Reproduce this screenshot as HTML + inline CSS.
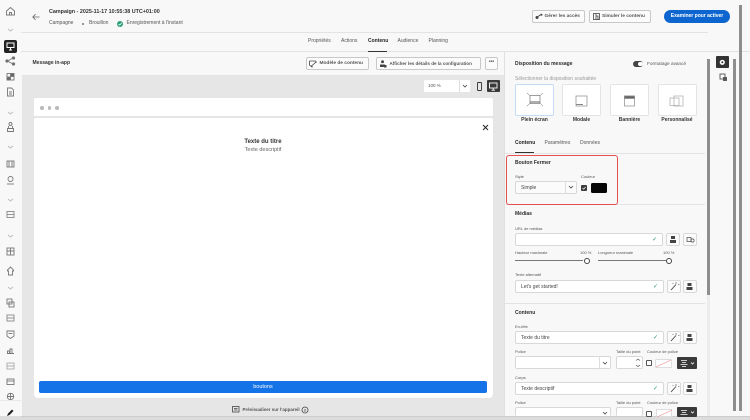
<!DOCTYPE html>
<html lang="fr"><head><meta charset="utf-8"><title>Campaign</title>
<style>
*{box-sizing:border-box}
html,body{margin:0;padding:0}
body{width:750px;height:420px;overflow:hidden;background:#f8f8f8;position:relative;font-family:"Liberation Sans",sans-serif;color:#2c2c2c}
.a{position:absolute}
.t{position:absolute;white-space:nowrap;line-height:1}
.btn{position:absolute;background:#fbfbfb;border:1px solid #c8c8c8;border-radius:2px;height:13px;font-size:4.800px;line-height:11px;font-weight:bold;color:#555;white-space:nowrap}
.ib{position:absolute;background:#fbfbfb;border:1px solid #d8d8d8;border-radius:2px;width:14px;height:13px}
.in{position:absolute;background:#fff;border:1px solid #d8d8d8;border-radius:2px;height:13px;font-size:5px;line-height:12px;color:#444;padding-left:5px}
.lb{position:absolute;font-size:4px;line-height:5px;color:#555;white-space:nowrap}
.h{position:absolute;font-size:5px;line-height:6px;font-weight:bold;color:#2c2c2c;white-space:nowrap}
.ck{position:absolute;right:5px;top:2px;color:#2d9d78;font-size:6px;line-height:9px}
.card{position:absolute;top:84px;width:39px;height:32px;background:#fff;border:1px solid #e4e4e4;border-radius:2px}
.cl{position:absolute;top:116.500px;font-size:5px;line-height:6px;font-weight:bold;text-align:center;color:#333;white-space:nowrap}
.hr{position:absolute;height:1px;background:#e3e3e3}
svg{position:absolute;overflow:visible}
.ic{fill:none;stroke:#777;stroke-width:.9}
.sc{position:absolute;background:#8e8e8e;width:3px}
</style></head><body>

<!-- sidebar -->
<div class="a" style="left:0;top:0;width:21px;height:420px;background:#f8f8f8"></div>
<svg style="left:0;top:0" width="21" height="420" class="ic">
<path d="M6.500 11 L10.500 7.500 L14.500 11 V15 H6.500Z M9.500 15 V12.500 H11.500 V15"/>
<path d="M8 29 l2.500 2 l2.500 -2M8 112 l2.500 2 l2.500 -2M8 146 l2.500 2 l2.500 -2M8 199 l2.500 2 l2.500 -2M8 235 l2.500 2 l2.500 -2M8 287 l2.500 2 l2.500 -2" stroke="#bbb"/>
<path d="M7.500 61 L13 58M7.500 61 L13 64" /><circle cx="7" cy="61" r="1.200" fill="#666"/><circle cx="13.500" cy="58" r="1.200" fill="#666"/><circle cx="13.500" cy="64" r="1.200" fill="#666"/>
<rect x="7" y="73.500" width="7" height="6.500"/><rect x="10.500" y="73.500" width="3.500" height="3" fill="#666"/><rect x="7" y="77" width="3.500" height="3" fill="#666"/>
<path d="M7.500 88 h4 l2 2 v6 h-6z M9 92 h3 M9 94 h3"/>
<circle cx="10.500" cy="124" r="1.500"/><path d="M8.500 126 v2 M12.500 126 v2 M7.500 128.500 h6 v3 h-6z"/>
<rect x="7" y="161" width="7" height="6"/><path d="M9 161 v6 M12 161 v6"/>
<circle cx="10.500" cy="179" r="2.500"/><path d="M7 184 h7"/>
<rect x="7" y="211.500" width="7" height="6" stroke="#888"/><path d="M7 214.500 h7" stroke="#888"/>
<rect x="7" y="248" width="7" height="7"/><path d="M7 251 h7 M10.500 248 v7"/>
<path d="M7.500 270 l3 -3 l3 3 v1 h-1 v4 h-4 v-4 h-1z"/>
<rect x="7" y="299" width="5" height="5"/><rect x="9" y="302" width="5" height="5"/>
<rect x="7" y="315" width="7" height="6" stroke="#888"/><path d="M7 318 h7" stroke="#888"/>
<path d="M7 331 h7 v5 l-3.500 2.500 l-3.500 -2.500z"/><path d="M8.500 333.500 h4"/>
<path d="M7.500 353 v-2 h2 v2 M10 353 v-4 h2 v4 M7 353.500 h7"/>
<rect x="7" y="363" width="7" height="6" stroke="#aaa"/><path d="M7 366 h7" stroke="#aaa"/>
<rect x="7" y="379" width="7" height="5.500"/><path d="M7 381 h7"/>
<circle cx="10.500" cy="396.500" r="3.200"/><path d="M7.300 396.500 h6.400 M10.500 393.300 v6.400"/>
</svg>
<div class="a" style="left:4px;top:39.500px;width:13px;height:13px;background:#222;border-radius:2px"></div>
<svg style="left:4px;top:39.500px" width="13" height="13" fill="none" stroke="#fff" stroke-width="1"><rect x="3" y="3" width="7" height="4.500"/><path d="M6.500 7.500 v2.500 M5 10 h3"/></svg>
<div class="hr" style="left:0;top:400px;width:21px;background:#e8e8e8"></div>
<svg style="left:6px;top:408px" width="9" height="9"><path d="M1 8 L2 5.500 L6 1.500 L7.500 3 L3.500 7z" fill="#222"/></svg>

<!-- header -->
<svg style="left:32px;top:13px" width="9" height="8" fill="none" stroke="#666" stroke-width=".8"><path d="M7.500 4 H.8 M3.500 1.200 L.8 4 L3.500 6.800"/></svg>
<div class="t" style="left:49px;top:10px;font-size:5.400px;font-weight:bold;color:#333">Campaign - 2025-11-17 10:55:38 UTC+01:00</div>
<div class="t" style="left:49px;top:21px;font-size:5px;color:#555">Campagne</div>
<div class="a" style="left:81.500px;top:22.500px;width:2.500px;height:2.500px;background:#777;border-radius:50%"></div>
<div class="t" style="left:89px;top:21px;font-size:5px;color:#555">Brouillon</div>
<div class="a" style="left:117px;top:20.500px;width:6px;height:6px;background:#2d9d78;border-radius:50%"></div>
<svg style="left:117px;top:20.500px" width="6" height="6" fill="none" stroke="#fff" stroke-width=".8"><path d="M1.500 3 L2.700 4.200 L4.600 1.900"/></svg>
<div class="t" style="left:126.500px;top:21px;font-size:5px;color:#555">Enregistrement à l'instant</div>

<div class="btn" style="left:531.500px;top:10px;width:53px;padding-left:12px">Gérer les accès</div>
<svg style="left:535px;top:13px" width="8" height="7"><circle cx="2" cy="4.500" r="1.500" fill="#444"/><path d="M3 3.500 L6 1.500" stroke="#444" stroke-width="1"/><circle cx="6.500" cy="1.800" r="1" fill="#444"/></svg>
<div class="btn" style="left:589px;top:10px;width:62px;padding-left:12px">Simuler le contenu</div>
<svg style="left:592.500px;top:12.500px" width="8" height="8" fill="none" stroke="#444" stroke-width=".8"><rect x=".5" y=".5" width="6" height="6"/><path d="M3 .5 v6 M3 3 h2 v4"/></svg>
<div class="a" style="left:664px;top:10px;width:66px;height:13px;background:#0d66d0;border-radius:7px;color:#fff;font-size:5px;font-weight:bold;line-height:13px;text-align:center">Examiner pour activer</div>

<div class="hr" style="left:21px;top:32px;width:687px"></div>
<div class="hr" style="left:21px;top:51px;width:729px"></div>

<!-- tabs -->
<div class="t" style="left:308px;top:39px;font-size:5px;color:#555">Propriétés</div>
<div class="t" style="left:341px;top:39px;font-size:5px;color:#555">Actions</div>
<div class="t" style="left:368px;top:39px;font-size:5px;font-weight:bold;color:#222">Contenu</div>
<div class="a" style="left:368px;top:50.500px;width:19px;height:1px;background:#333"></div>
<div class="t" style="left:397.500px;top:39px;font-size:5px;color:#555">Audience</div>
<div class="t" style="left:428.500px;top:39px;font-size:5px;color:#555">Planning</div>

<!-- Message row -->
<div class="t" style="left:32.500px;top:61px;font-size:5px;font-weight:bold;color:#333">Message in-app</div>
<div class="btn" style="left:305.500px;top:57px;width:63.500px;padding-left:13px">Modèle de contenu</div>
<svg style="left:309px;top:59.500px" width="8" height="8" fill="none" stroke="#444" stroke-width=".8"><path d="M.5 1 H7 M.5 1 V5 L3 7 V5 M7 1 V3 M2.500 6 L7 2"/></svg>
<div class="btn" style="left:375.500px;top:57px;width:105px;padding-left:13px;font-size:4.550px">Afficher les détails de la configuration</div>
<svg style="left:379px;top:59.500px" width="8" height="8"><circle cx="3.500" cy="1.800" r="1.500" fill="#444"/><path d="M1 7 V4.500 H6 V7z" fill="#444"/><rect x="5" y="5" width="2.500" height="2.500" fill="#444"/></svg>
<div class="btn" style="left:485px;top:57px;width:13px;text-align:center;line-height:9px;font-size:5px">•••</div>

<!-- canvas -->
<div class="a" style="left:22px;top:75px;width:482px;height:341px;background:#e6e6e6"></div>
<div class="a" style="left:423.500px;top:80px;width:46px;height:11.500px;background:#fff;border-radius:1px"></div>
<div class="t" style="left:428px;top:83.500px;font-size:4.500px;color:#555">100 %</div>
<div class="a" style="left:458.500px;top:80px;width:1px;height:11.500px;background:#ddd"></div>
<svg style="left:461.500px;top:84px" width="6" height="4" fill="none" stroke="#444" stroke-width=".8"><path d="M1 1 L3 3 L5 1"/></svg>
<svg style="left:476px;top:81.500px" width="8" height="9" fill="none" stroke="#333" stroke-width=".9"><rect x="1.500" y=".5" width="4" height="8" rx=".6"/></svg>
<div class="a" style="left:487px;top:79.500px;width:12.500px;height:12.500px;background:#3a3a3a;border-radius:1px"></div>
<svg style="left:487px;top:79.500px" width="13" height="13" fill="none" stroke="#fff" stroke-width=".9"><rect x="2.500" y="3" width="7.500" height="5"/><path d="M6.200 8 v2 M4.500 10.200 h3.500"/></svg>

<div class="a" style="left:33.500px;top:98px;width:459px;height:18px;background:#fff;border-radius:2px 2px 0 0"></div>
<div class="a" style="left:40px;top:106px;width:3.500px;height:3.500px;background:#bbb;border-radius:50%"></div>
<div class="a" style="left:47.500px;top:106px;width:3.500px;height:3.500px;background:#bbb;border-radius:50%"></div>
<div class="a" style="left:55px;top:106px;width:3.500px;height:3.500px;background:#bbb;border-radius:50%"></div>
<div class="a" style="left:33.500px;top:117.500px;width:459px;height:280px;background:#fff;border-radius:2px 2px 4px 4px"></div>
<svg style="left:481.500px;top:123.500px" width="7" height="7" fill="none" stroke="#222" stroke-width="1"><path d="M1 1 L6 6 M6 1 L1 6"/></svg>
<div class="t" style="left:33.500px;width:459px;text-align:center;top:139px;font-size:6px;font-weight:bold;color:#333">Texte du titre</div>
<div class="t" style="left:33.500px;width:459px;text-align:center;top:148px;font-size:5.500px;color:#666">Texte descriptif</div>
<div class="a" style="left:39px;top:381px;width:448px;height:12px;background:#1473e6;border-radius:2px;color:#fff;font-size:5.500px;line-height:12px;text-align:center">boutons</div>

<svg style="left:232px;top:406px" width="8" height="7" fill="none" stroke="#444" stroke-width=".8"><rect x=".5" y=".5" width="6.500" height="5.500"/><path d="M2 2.500 h3.500 M2 4 h3.500"/></svg>
<div class="t" style="left:242.500px;top:407.500px;font-size:4.500px;font-weight:bold;color:#555">Prévisualiser sur l'appareil</div>
<svg style="left:300.500px;top:405.500px" width="8" height="8" fill="none" stroke="#444" stroke-width=".8"><circle cx="4" cy="4" r="3"/><path d="M4 3 v2.700"/></svg>
<div class="a" style="left:0;top:416px;width:750px;height:4px;background:#dcdcdc"></div>
<div class="a" style="left:21px;top:416px;width:729px;height:1px;background:#ccc"></div>

<!-- right panel -->
<div class="a" style="left:504px;top:52px;width:1px;height:364px;background:#e0e0e0"></div>
<div class="h" style="left:515px;top:61px">Disposition du message</div>
<div class="a" style="left:632.500px;top:61px;width:10.500px;height:5.500px;background:#444;border-radius:3px"></div>
<div class="a" style="left:638px;top:61.500px;width:4.500px;height:4.500px;background:#fff;border-radius:50%"></div>
<div class="t" style="left:647px;top:61.500px;font-size:4.700px;color:#555">Formatage avancé</div>
<div class="t" style="left:515px;top:76.500px;font-size:5px;color:#999">Sélectionner la disposition souhaitée</div>

<div class="card" style="left:515px;border-color:#c5dcf5"></div>
<div class="card" style="left:562px"></div>
<div class="card" style="left:610px"></div>
<div class="card" style="left:657.500px"></div>
<svg style="left:526px;top:92px" width="18" height="16" fill="none" stroke="#777" stroke-width=".7"><rect x="4" y="3.500" width="10" height="8"/><path d="M1 1 L4 3.500 M17 1 L14 3.500 M1 14 L4 11.500 M17 14 L14 11.500" stroke-dasharray="1 .6"/><path d="M4 10 h10" stroke-width="1.200"/></svg>
<svg style="left:575px;top:94.500px" width="14" height="13" fill="none" stroke="#888" stroke-width=".7"><rect x="1" y="1" width="11" height="10"/><path d="M1 9.500 h7" stroke-width="1"/></svg>
<svg style="left:623px;top:94.500px" width="14" height="13" fill="none" stroke="#888" stroke-width=".7"><rect x="1.500" y="1" width="10" height="10"/><rect x="1.500" y="1" width="10" height="2.500" fill="#666"/></svg>
<svg style="left:669px;top:94.500px" width="16" height="13" fill="none" stroke="#aaa" stroke-width=".7"><rect x="1" y="3" width="9" height="7.500"/><rect x="5" y="1" width="9" height="10"/></svg>
<div class="cl" style="left:515px;width:39px">Plein écran</div>
<div class="cl" style="left:562px;width:39px">Modale</div>
<div class="cl" style="left:610px;width:39px">Bannière</div>
<div class="cl" style="left:657.500px;width:39px">Personnalisé</div>

<div class="t" style="left:515px;top:140.500px;font-size:5px;font-weight:bold;color:#222">Contenu</div>
<div class="t" style="left:544.500px;top:140.500px;font-size:5px;color:#555">Paramètres</div>
<div class="t" style="left:580px;top:140.500px;font-size:5px;color:#555">Données</div>
<div class="hr" style="left:505px;top:152.500px;width:200px"></div>
<div class="a" style="left:515px;top:151.500px;width:19px;height:1.500px;background:#333"></div>

<div class="hr" style="left:505px;top:204px;width:200px"></div>
<div class="a" style="left:506px;top:154.500px;width:112px;height:50px;border:1px solid #e2504f;border-radius:3px"></div>
<div class="h" style="left:515px;top:160px">Bouton Fermer</div>
<div class="lb" style="left:515px;top:174px">Style</div>
<div class="lb" style="left:581px;top:174px">Couleur</div>
<div class="in" style="left:515px;top:181px;width:62px;background:#fbfbfb">Simple</div>
<div class="a" style="left:564.500px;top:181px;width:1px;height:13px;background:#ddd"></div>
<svg style="left:568px;top:185px" width="6" height="4" fill="none" stroke="#444" stroke-width=".8"><path d="M1 1 L3 3 L5 1"/></svg>
<div class="a" style="left:581px;top:184.500px;width:6px;height:6px;background:#3a3a3a;border-radius:1px"></div>
<svg style="left:581px;top:184.500px" width="6" height="6" fill="none" stroke="#fff" stroke-width=".7"><path d="M1.500 3 L2.700 4.200 L4.600 1.900"/></svg>
<div class="a" style="left:590.500px;top:183px;width:16px;height:9.500px;background:#060606;border-radius:1.500px"></div>

<div class="h" style="left:515px;top:211px">Médias</div>
<div class="lb" style="left:515px;top:226px">URL de médias</div>
<div class="in" style="left:515px;top:233px;width:148px"><span class="ck">✓</span></div>
<div class="ib" style="left:666px;top:233px"></div>
<div class="ib" style="left:683px;top:233px"></div>
<div class="lb" style="left:515px;top:250px">Hauteur maximale</div>
<div class="lb" style="left:580px;top:250px">100 %</div>
<div class="lb" style="left:598px;top:250px">Longueur maximale</div>
<div class="lb" style="left:663px;top:250px">100 %</div>
<div class="a" style="left:515px;top:260px;width:68px;height:1px;background:#777"></div>
<div class="a" style="left:597.500px;top:260px;width:68px;height:1px;background:#777"></div>
<div class="a" style="left:583.500px;top:257.500px;width:6px;height:6px;border:1px solid #444;border-radius:50%;background:#fff"></div>
<div class="a" style="left:666px;top:257.500px;width:6px;height:6px;border:1px solid #444;border-radius:50%;background:#fff"></div>
<div class="lb" style="left:515px;top:272px">Texte alternatif</div>
<div class="in" style="left:515px;top:279.500px;width:149px">Let's get started!<span class="ck">✓</span></div>
<div class="ib" style="left:667px;top:279.500px"></div>
<div class="ib" style="left:683px;top:279.500px"></div>

<div class="hr" style="left:505px;top:302.500px;width:200px"></div>
<div class="h" style="left:515px;top:310px">Contenu</div>
<div class="lb" style="left:515px;top:324px">En-tête</div>
<div class="in" style="left:515px;top:331px;width:149px">Texte du titre<span class="ck">✓</span></div>
<div class="ib" style="left:667px;top:331px"></div>
<div class="ib" style="left:683px;top:331px"></div>
<div class="lb" style="left:515px;top:349px">Police</div>
<div class="lb" style="left:616px;top:349px">Taille du point</div>
<div class="lb" style="left:647px;top:349px">Couleur de police</div>
<div class="in" style="left:515px;top:356px;width:96px"></div>
<div class="a" style="left:599px;top:356px;width:1px;height:13px;background:#ddd"></div>
<svg style="left:602px;top:360.500px" width="6" height="4" fill="none" stroke="#444" stroke-width=".8"><path d="M1 1 L3 3 L5 1"/></svg>
<div class="in" style="left:615.500px;top:356px;width:27px"></div>
<svg style="left:635px;top:358px" width="6" height="10" fill="none" stroke="#555" stroke-width=".7"><path d="M1 2.500 L3 1 L5 2.500 M1 7 L3 8.500 L5 7"/></svg>
<div class="a" style="left:646px;top:360px;width:6px;height:6px;border:1px solid #555;border-radius:1px;background:#fff"></div>
<div class="a" style="left:655px;top:358.500px;width:17px;height:9px;background:#fff;border:1px solid #ddd;border-radius:1px"></div>
<svg style="left:655px;top:358.500px" width="17" height="9"><path d="M1 8 L16 1" stroke="#e88" stroke-width=".6"/></svg>
<div class="a" style="left:677px;top:356.500px;width:19.500px;height:12.500px;background:#3a3a3a;border-radius:1px"></div>
<svg style="left:677px;top:356.500px" width="20" height="13" fill="none" stroke="#fff" stroke-width=".8"><path d="M4 3.500 h6 M5 5.500 h4 M3.500 7.500 h7 M5 9.500 h4 M14 5.500 L15.500 7 L17 5.500"/></svg>

<div class="lb" style="left:515px;top:374.500px">Corps</div>
<div class="in" style="left:515px;top:381.500px;width:149px">Texte descriptif<span class="ck">✓</span></div>
<div class="ib" style="left:667px;top:381.500px"></div>
<div class="ib" style="left:683px;top:381.500px"></div>
<div class="lb" style="left:515px;top:399.500px">Police</div>
<div class="lb" style="left:616px;top:399.500px">Taille du point</div>
<div class="lb" style="left:647px;top:399.500px">Couleur de police</div>
<div class="in" style="left:515px;top:407px;width:96px;height:9px;border-bottom:0"></div>
<div class="in" style="left:615.500px;top:407px;width:27px;height:9px;border-bottom:0"></div>
<svg style="left:602px;top:411px" width="6" height="4" fill="none" stroke="#444" stroke-width=".8"><path d="M1 1 L3 3 L5 1"/></svg>
<div class="a" style="left:646px;top:410.500px;width:6px;height:6px;border:1px solid #555;border-radius:1px;background:#fff"></div>
<div class="a" style="left:655.500px;top:408.500px;width:16.500px;height:8px;background:#fff;border:1px solid #ddd"></div>
<svg style="left:655.500px;top:408.500px" width="17" height="8"><path d="M1 8 L16 1" stroke="#e88" stroke-width=".6"/></svg>
<div class="a" style="left:677px;top:407px;width:19.500px;height:9.500px;background:#3a3a3a;border-radius:1px"></div>
<svg style="left:677px;top:407px" width="20" height="10" fill="none" stroke="#fff" stroke-width=".8"><path d="M4 3.500 h6 M5 5.500 h4 M3.500 7.500 h7 M14 4.500 L15.500 6 L17 4.500"/></svg>

<!-- small icon glyphs in icon buttons -->
<svg style="left:666px;top:233px" width="31" height="13"><rect x="5" y="3" width="4" height="3" fill="#444"/><rect x="4" y="7" width="6" height="3" fill="#444"/><rect x="21" y="4.500" width="4" height="4" fill="none" stroke="#444" stroke-width=".7"/><circle cx="26.500" cy="7.500" r="1.600" fill="none" stroke="#444" stroke-width=".7"/></svg>
<svg style="left:667px;top:279.500px" width="30" height="13"><path d="M4 10 L9 4.500" stroke="#444" stroke-width=".9"/><path d="M9 2 v2 M11 4.500 h1.500 M6 3 v1" stroke="#444" stroke-width=".6"/><rect x="20.500" y="3" width="4" height="3" fill="#444"/><rect x="19.500" y="7" width="6" height="3" fill="#444"/></svg>
<svg style="left:667px;top:331px" width="30" height="13"><path d="M4 10 L9 4.500" stroke="#444" stroke-width=".9"/><path d="M9 2 v2 M11 4.500 h1.500 M6 3 v1" stroke="#444" stroke-width=".6"/><rect x="20.500" y="3" width="4" height="3" fill="#444"/><rect x="19.500" y="7" width="6" height="3" fill="#444"/></svg>
<svg style="left:667px;top:381.500px" width="30" height="13"><path d="M4 10 L9 4.500" stroke="#444" stroke-width=".9"/><path d="M9 2 v2 M11 4.500 h1.500 M6 3 v1" stroke="#444" stroke-width=".6"/><rect x="20.500" y="3" width="4" height="3" fill="#444"/><rect x="19.500" y="7" width="6" height="3" fill="#444"/></svg>

<!-- scrollbars -->
<div class="sc" style="left:707px;top:59px;height:236px"></div>
<div class="sc" style="left:733px;top:59px;height:352px"></div>
<div class="sc" style="left:739px;top:5px;height:406px"></div>
<div class="a" style="left:707px;top:295px;width:3px;height:121px;background:#ececec"></div>

<!-- far right icons -->
<div class="a" style="left:716px;top:55.500px;width:12.500px;height:12.500px;background:#333;border-radius:1px"></div>
<svg style="left:716px;top:55.500px" width="13" height="13"><circle cx="6.300" cy="6.300" r="2.600" fill="#fff"/><circle cx="6.300" cy="6.300" r="1" fill="#333"/></svg>
<svg style="left:718.500px;top:73px" width="9" height="9" fill="none" stroke="#555" stroke-width=".9"><rect x="1" y="1" width="5" height="5"/><rect x="4.500" y="4.500" width="3" height="3" fill="#555"/></svg>
</body></html>
